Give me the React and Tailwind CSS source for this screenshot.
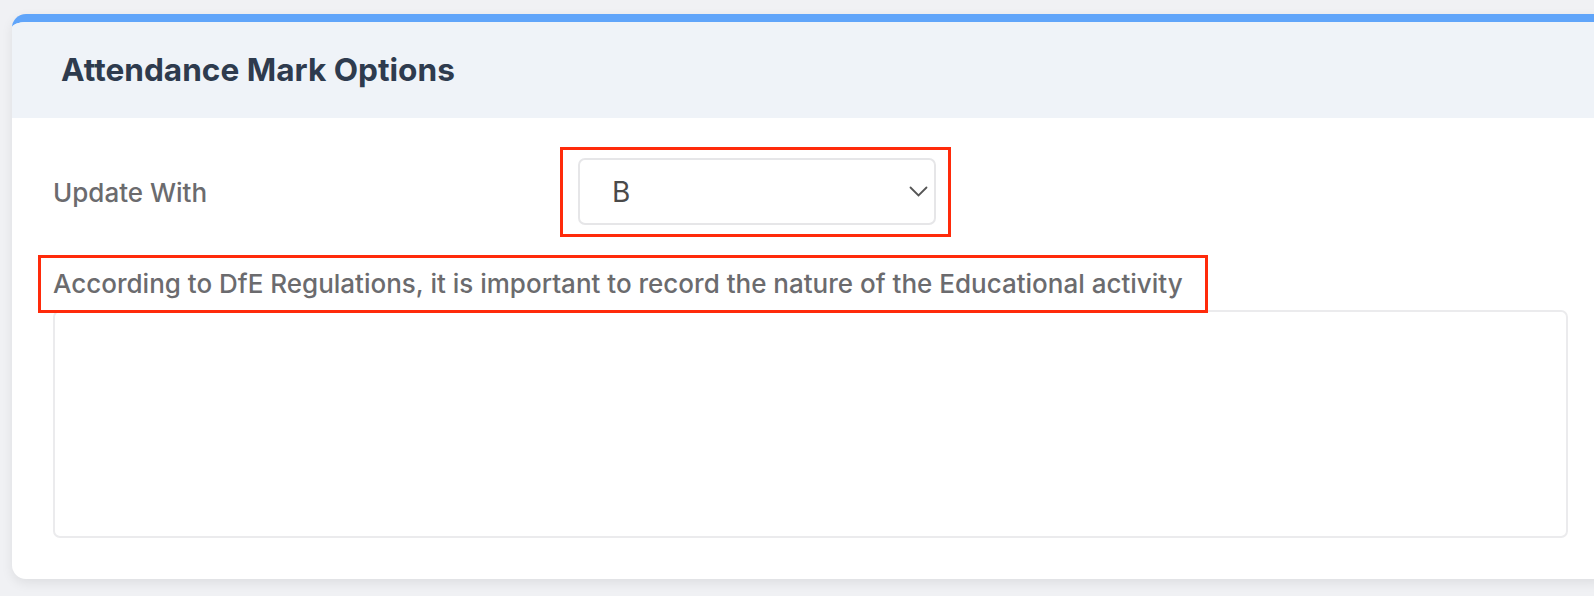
import React from "react";

export default function App() {
  return (
    <div className="h-[596px] overflow-hidden bg-[#f0f1f4] pt-[14px] pl-[12px]" style={{ fontFamily: "Inter, 'Noto Sans', sans-serif" }}>
      <div className="w-[1600px] overflow-hidden rounded-[14px] border-t-8 border-[#60a5fa] bg-white shadow-[0_4px_12px_rgba(0,0,0,0.08)]">
        {/* header */}
        <div className="flex h-[96px] items-center bg-[#eff3f8] pl-[49px]">
          <h2 className="text-[31.6px] font-bold text-[#2e3b4e]">Attendance Mark Options</h2>
        </div>

        {/* body */}
        <div className="pl-[26px] pr-[44px] pt-[29px] pb-[41px]">
          <div className="flex items-center">
            <label className="w-[522px] pl-[15px] text-[26px] font-medium text-[#6b6b6e]">Update With</label>
            <div className="border-[3px] border-[#ff2a0a] pt-[8px] pb-[9px] pl-[15px] pr-[12px]">
              <div className="flex h-[67px] w-[358px] items-center justify-between rounded-[7px] border-2 border-[#e6e6e8] pl-[32px] pr-[6px]">
                <span className="text-[28px] text-[#4a4a4a]">B</span>
                <svg className="h-[11px] w-[19px]" viewBox="0 0 19 11" fill="none" stroke="#555" strokeWidth="1.8" strokeLinecap="round">
                  <path d="M1.5 1.5l8 8 8-8" />
                </svg>
              </div>
            </div>
          </div>

          <div className="relative z-10 mt-[18px] w-[1170px] border-[3px] border-[#ff2a0a] py-[10px] pl-[12px]">
            <p className="whitespace-nowrap text-[26px] font-medium leading-[32px] text-[#6b6b6e]">
              According to DfE Regulations, it is important to record the nature of the Educational activity
            </p>
          </div>

          <textarea className="-mt-[3px] ml-[15px] block h-[228px] w-[1515px] resize-none rounded-[7px] border-2 border-[#ebebed] bg-white outline-none" />
        </div>
      </div>
    </div>
  );
}
